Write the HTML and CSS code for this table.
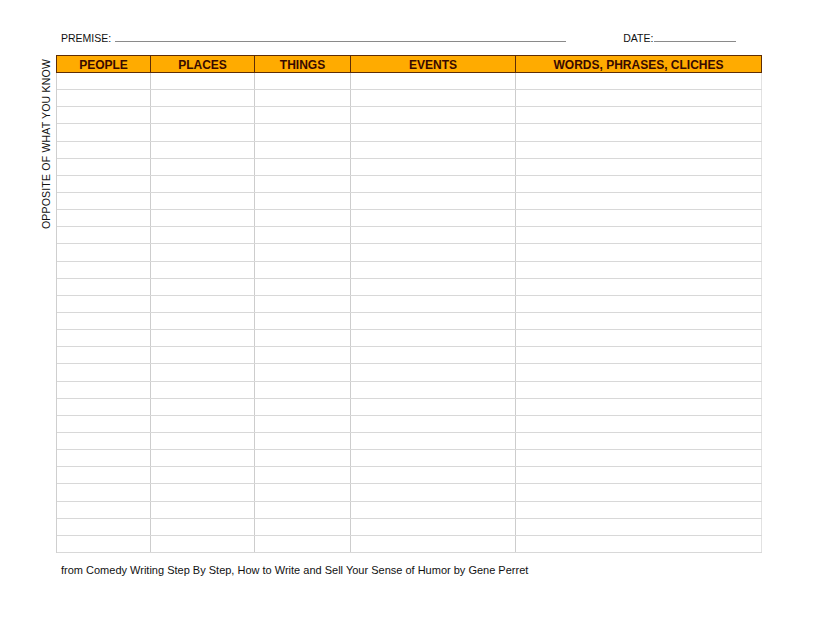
FILE: index.html
```html
<!DOCTYPE html>
<html>
<head>
<meta charset="utf-8">
<link rel="stylesheet" href="styles.css">
</head>
<body>
<div class="page">
  <div class="top">
    <span class="label">PREMISE:</span><span class="blank premise-blank"></span>
    <span class="label date-label">DATE:</span><span class="blank date-blank"></span>
  </div>
  <div class="main">
    <div class="side"><span class="side-label">OPPOSITE OF WHAT YOU KNOW</span></div>
    <div class="sheet">
      <div class="head">
        <div class="hc">PEOPLE</div>
        <div class="hc">PLACES</div>
        <div class="hc">THINGS</div>
        <div class="hc">EVENTS</div>
        <div class="hc">WORDS, PHRASES, CLICHES</div>
      </div>
      <div class="grid">
        <div class="row"><i></i><i></i><i></i><i></i><i></i></div>
        <div class="row"><i></i><i></i><i></i><i></i><i></i></div>
        <div class="row"><i></i><i></i><i></i><i></i><i></i></div>
        <div class="row"><i></i><i></i><i></i><i></i><i></i></div>
        <div class="row"><i></i><i></i><i></i><i></i><i></i></div>
        <div class="row"><i></i><i></i><i></i><i></i><i></i></div>
        <div class="row"><i></i><i></i><i></i><i></i><i></i></div>
        <div class="row"><i></i><i></i><i></i><i></i><i></i></div>
        <div class="row"><i></i><i></i><i></i><i></i><i></i></div>
        <div class="row"><i></i><i></i><i></i><i></i><i></i></div>
        <div class="row"><i></i><i></i><i></i><i></i><i></i></div>
        <div class="row"><i></i><i></i><i></i><i></i><i></i></div>
        <div class="row"><i></i><i></i><i></i><i></i><i></i></div>
        <div class="row"><i></i><i></i><i></i><i></i><i></i></div>
        <div class="row"><i></i><i></i><i></i><i></i><i></i></div>
        <div class="row"><i></i><i></i><i></i><i></i><i></i></div>
        <div class="row"><i></i><i></i><i></i><i></i><i></i></div>
        <div class="row"><i></i><i></i><i></i><i></i><i></i></div>
        <div class="row"><i></i><i></i><i></i><i></i><i></i></div>
        <div class="row"><i></i><i></i><i></i><i></i><i></i></div>
        <div class="row"><i></i><i></i><i></i><i></i><i></i></div>
        <div class="row"><i></i><i></i><i></i><i></i><i></i></div>
        <div class="row"><i></i><i></i><i></i><i></i><i></i></div>
        <div class="row"><i></i><i></i><i></i><i></i><i></i></div>
        <div class="row"><i></i><i></i><i></i><i></i><i></i></div>
        <div class="row"><i></i><i></i><i></i><i></i><i></i></div>
        <div class="row"><i></i><i></i><i></i><i></i><i></i></div>
        <div class="row"><i></i><i></i><i></i><i></i><i></i></div>
      </div>
    </div>
  </div>
  <div class="footer">from Comedy Writing Step By Step, How to Write and Sell Your Sense of Humor by Gene Perret</div>
</div>
</body>
</html>
```

FILE: styles.css
```css
html, body {
  margin: 0;
  padding: 0;
  background: #ffffff;
}
body {
  font-family: "Liberation Sans", Arial, sans-serif;
  color: #111;
  width: 825px;
  height: 637px;
  overflow: hidden;
}
.page {
  padding-top: 31px;
}
.top {
  display: flex;
  align-items: baseline;
  padding-left: 61px;
  height: 13px;
  font-size: 10.5px;
  line-height: 13px;
}
.blank {
  display: inline-block;
  height: 10px;
  margin-bottom: -1px;
  border-bottom: 1px solid #8a8a8a;
}
.premise-blank {
  margin-left: 4px;
  width: 451px;
}
.date-label {
  margin-left: 57px;
}
.date-blank {
  margin-left: 1px;
  width: 82px;
}
.main {
  display: flex;
  margin-top: 11px;
}
.side {
  width: 56px;
  display: flex;
  justify-content: flex-end;
  padding-right: 4px;
  box-sizing: border-box;
  padding-top: 4px;
}
.side-label {
  writing-mode: vertical-rl;
  transform: rotate(180deg);
  font-size: 10.5px;
  line-height: 12px;
  letter-spacing: 0.2px;
  color: #111;
  height: max-content;
}
.sheet {
  width: 706px;
}
.head {
  display: grid;
  grid-template-columns: 93px 104px 96px 165px 246px;
  height: 18px;
  box-sizing: border-box;
  background: #ffab00;
  border: 1px solid #5e2d05;
}
.hc {
  font-weight: bold;
  font-size: 12px;
  line-height: 16px;
  padding-top: 1px;
  box-sizing: border-box;
  text-align: center;
  color: #380a00;
  border-left: 1px solid #5e2d05;
}
.hc:first-child {
  border-left: none;
}
.grid {
  display: grid;
  grid-template-rows: repeat(28, 1fr);
  height: 480px;
  border-left: 1px solid #cfcfcf;
}
.row {
  display: grid;
  grid-template-columns: 94px 104px 96px 165px 246px;
  border-bottom: 1px solid #d8d8d8;
}
.row i {
  border-right: 1px solid #cdcdcd;
}
.row i:last-child {
  border-right-color: #e2e2e2;
}
.footer {
  padding-left: 61px;
  margin-top: 11px;
  font-size: 11px;
  line-height: 13px;
  color: #111;
}
```
